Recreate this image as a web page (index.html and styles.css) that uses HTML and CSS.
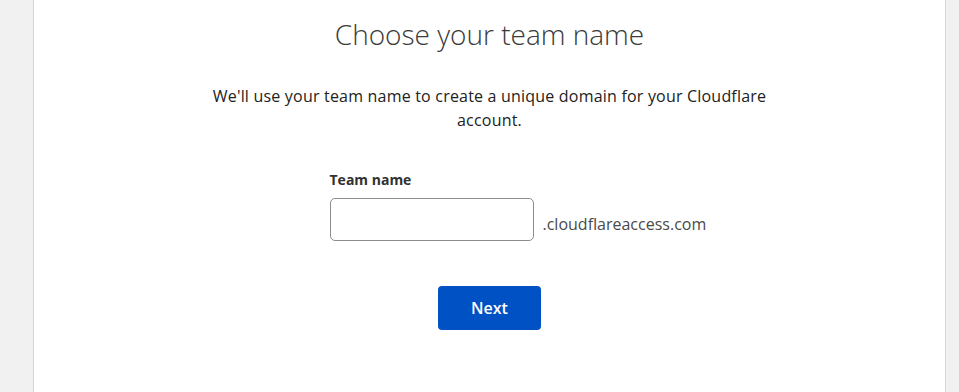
FILE: index.html
```html
<!DOCTYPE html>
<html lang="en">
<head>
    <meta charset="UTF-8">
    <meta name="viewport" content="width=device-width, initial-scale=1.0">
    <title>Choose your team name</title>
    <link rel="stylesheet" href="styles.css">
</head>
<body>
    <div class="page">
        <div class="card">
            <h1>Choose your team name</h1>
            <p class="intro">We'll use your team name to create a unique domain for your Cloudflare account.</p>

            <div class="form">
                <label for="teamName">Team name</label>
                <div class="field-row">
                    <input type="text" id="teamName">
                    <span class="suffix">.cloudflareaccess.com</span>
                </div>
            </div>

            <div class="actions">
                <button type="button">Next</button>
            </div>
        </div>
    </div>
</body>
</html>
```

FILE: styles.css
```css
body {
    font-family: "Open Sans", "Noto Sans", sans-serif;
    margin: 0;
    padding: 0;
    background-color: #f1f1f1;
}
.page {
    display: flex;
    justify-content: center;
    padding-left: 33px;
    padding-right: 13px;
    height: 392px;
    box-sizing: border-box;
}
.card {
    flex: 1;
    background: #ffffff;
    border-left: 1px solid #d6d6d6;
    border-right: 1px solid #d6d6d6;
    padding-top: 15px;
    text-align: center;
}
h1 {
    margin: 0;
    font-size: 28px;
    font-weight: 300;
    line-height: 38px;
    color: #3a3a3a;
}
.intro {
    max-width: 580px;
    margin: 31px auto 0;
    font-size: 16px;
    line-height: 24px;
    letter-spacing: 0.2px;
    color: #222222;
}
.form {
    width: 320px;
    margin: 38px auto 0;
    text-align: left;
}
label {
    display: block;
    font-size: 14px;
    font-weight: 700;
    color: #313131;
    margin-bottom: 9px;
}
.field-row {
    display: flex;
    align-items: center;
    white-space: nowrap;
}
input {
    width: 204px;
    height: 43px;
    box-sizing: border-box;
    border: 1px solid #8c8c8c;
    border-radius: 5px;
    padding: 0 10px;
    font-size: 16px;
    flex-shrink: 0;
}
.suffix {
    margin-left: 9px;
    font-size: 16px;
    color: #4a4a4a;
    padding-top: 8px;
}
.actions {
    margin-top: 45px;
}
button {
    width: 103px;
    height: 44px;
    background-color: #0051c3;
    color: white;
    border: none;
    border-radius: 4px;
    font-family: inherit;
    font-size: 16px;
    font-weight: 600;
    cursor: pointer;
}
```
